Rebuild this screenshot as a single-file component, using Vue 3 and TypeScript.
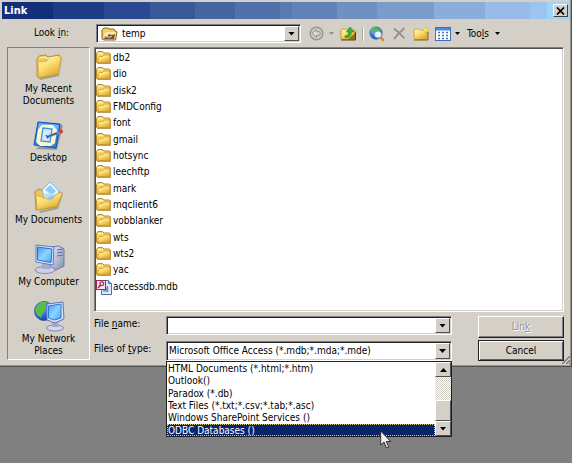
<script setup lang="ts">
import { ref } from 'vue'

interface Place {
  id: string
  lines: string[]
  roomy?: boolean
}

const places: Place[] = [
  { id: 'recent', lines: ['My Recent', 'Documents'] },
  { id: 'desktop', lines: ['Desktop'], roomy: true },
  { id: 'documents', lines: ['My Documents'], roomy: true },
  { id: 'computer', lines: ['My Computer'] },
  { id: 'network', lines: ['My Network', 'Places'] },
]

const folders: string[] = [
  'db2', 'dio', 'disk2', 'FMDConfig', 'font', 'gmail', 'hotsync',
  'leechftp', 'mark', 'mqclient6', 'vobblanker', 'wts', 'wts2', 'yac',
]

const fileTypes: string[] = [
  'HTML Documents (*.html;*.htm)',
  'Outlook()',
  'Paradox (*.db)',
  'Text Files (*.txt;*.csv;*.tab;*.asc)',
  'Windows SharePoint Services ()',
  'ODBC Databases ()',
]

const fileName = ref('')
const highlighted = ref(5)
</script>

<template>
  <div class="backdrop">
    <main class="dialog" role="dialog" aria-labelledby="dialog-title">
      <svg class="defs" width="0" height="0" aria-hidden="true">
        <defs>
          <linearGradient id="gold" x1="0" y1="0" x2="0.6" y2="1">
            <stop offset="0" stop-color="#fff7b4" />
            <stop offset="0.5" stop-color="#fbdf74" />
            <stop offset="1" stop-color="#e0a92c" />
          </linearGradient>
          <linearGradient id="screen" x1="0" y1="0" x2="1" y2="1">
            <stop offset="0" stop-color="#3f9cf4" />
            <stop offset="0.5" stop-color="#8fd4ff" />
            <stop offset="1" stop-color="#4aa4f6" />
          </linearGradient>
          <linearGradient id="casing" x1="0" y1="0" x2="1" y2="1">
            <stop offset="0" stop-color="#f0f3fb" />
            <stop offset="1" stop-color="#8088b8" />
          </linearGradient>
          <radialGradient id="ocean" cx="0.35" cy="0.3" r="0.8">
            <stop offset="0" stop-color="#9cd0ff" />
            <stop offset="0.5" stop-color="#2f72e0" />
            <stop offset="1" stop-color="#143a9c" />
          </radialGradient>
          <symbol id="small-folder" viewBox="0 0 16 14">
            <path d="M1 12.5V3L3 1h4l1.500 1.500H14l1 1V13H2z" fill="#8a7432" opacity="0.6" />
            <path d="M.5 11.500V2.500L2 .5h4.500L8 2h5.500l.5 1v9H1z" fill="#f6d56c" stroke="#b98b26" />
            <path d="M2 11.500V7l1.500-1.500h3L8 4h6v7.500z" fill="url(#gold)" stroke="#c99728" stroke-width="0.8" />
            <path d="M2 2h4l1 1H2z" fill="#fff6c0" />
          </symbol>
        </defs>
      </svg>

      <header class="titlebar">
        <h1 id="dialog-title">Link</h1>
        <button class="close" type="button" aria-label="Close">
          <svg width="9" height="8" viewBox="0 0 9 8"><path d="M1 .5l7 7M8 .5l-7 7" stroke="#000" stroke-width="1.700" /></svg>
        </button>
      </header>

      <div class="toolbar">
        <label class="look-label" for="look-in">Look <u>i</u>n:</label>
        <div class="combo look">
          <svg class="temp-icon" width="17" height="14" viewBox="0 0 17 14" aria-hidden="true">
            <path d="M1 12V3l2-2h4l1 1h5l1 2 2 1-1.500 8H3z" fill="#f4ce62" stroke="#8b651d" />
            <path d="M3 7l3-2h9l-2 6H3z" fill="#ffeaa0" />
            <path d="M3 12l1-3 2 1 2-3 3 1 3-1-1 5z" fill="#775033" />
            <path d="M3 10.500l3-1 2 1 3-1.500" stroke="#b9c9d6" stroke-width="1.300" fill="none" />
          </svg>
          <select id="look-in"><option>temp</option></select>
          <span class="drop" aria-hidden="true"><i class="arrow"></i></span>
        </div>
        <div class="tools">
          <button type="button" class="tool back" aria-label="Back" disabled>
            <svg width="15" height="15" viewBox="0 0 15 15">
              <circle cx="7.500" cy="7.500" r="6.300" fill="#cbc8c1" stroke="#96938d" stroke-width="1.300" />
              <path d="M3 7.500L7.500 3.500v2.300H11v3.400H7.500v2.300z" fill="#dedbd5" stroke="#96938d" />
            </svg>
          </button>
          <button type="button" class="tool menu-arrow" aria-label="Back history" disabled><i class="arrow small dim"></i></button>
          <button type="button" class="tool up" aria-label="Up one level">
            <svg width="16" height="15" viewBox="0 0 16 15">
              <path d="M1 13V4l1-1h4l1 1h8v9.500H1.500z" fill="url(#gold)" stroke="#c79b35" />
              <path d="M8 13.500L15 7v6.500z" fill="#9a6c1c" />
              <path d="M1 14h14.500V6" fill="none" stroke="#54400f" />
              <path d="M5 11.500c4 .6 6.300-1.500 6.300-5.500H14L10 1 6.500 6h2.300c0 2.500-1.300 3.700-3.800 4z" fill="#35b53a" stroke="#14801c" stroke-width="0.6" />
            </svg>
          </button>
          <span class="rule"></span>
          <button type="button" class="tool web" aria-label="Search the web">
            <svg width="17" height="16" viewBox="0 0 17 16">
              <circle cx="7" cy="7" r="6.300" fill="url(#ocean)" stroke="#5876b4" stroke-width="0.600" />
              <path d="M3 2l3-1 2 1-1 2 1 1-2 2-3-1-1-2zM9 2l2 1 1 2-2 1-1-2z" fill="#57ba4c" />
              <path d="M12 11.500l2 2.500" stroke="#d88a25" stroke-width="2.600" stroke-linecap="round" />
              <circle cx="9" cy="8.500" r="3.600" fill="#e5f3ff" stroke="#7f97ba" />
            </svg>
          </button>
          <button type="button" class="tool delete" aria-label="Delete" disabled>
            <svg width="13" height="13" viewBox="0 0 13 13"><path d="M1 1.500c4 3 7 6 10.500 10M11.500 1C8 4 4 8 1 12" fill="none" stroke="#918e8b" stroke-width="1.700" /></svg>
          </button>
          <button type="button" class="tool new" aria-label="Create new folder">
            <svg width="17" height="15" viewBox="0 0 17 15">
              <path d="M1 13V4l1-1h4l1 1h7v9.500H1.500z" fill="url(#gold)" stroke="#d3a842" />
              <path d="M1 14h14V6" fill="none" stroke="#7b6224" />
              <path d="M12.500 0l.8 2.800L16.500 4l-3.200 1-.8 3-.8-3-3.200-1 3.200-1.200z" fill="#fff36b" stroke="#e5b52c" stroke-width="0.600" />
            </svg>
          </button>
          <button type="button" class="tool views" aria-label="Views">
            <svg width="16" height="14" viewBox="0 0 16 14">
              <rect x="0.500" y="0.500" width="15" height="13" fill="#fff" stroke="#3d6cc4" />
              <rect x="1" y="1" width="14" height="2.500" fill="#4c86e6" />
              <path d="M3 5.500h10M3 8.500h10M3 11.500h10" stroke="#4873b9" stroke-width="1.500" stroke-dasharray="2 2" />
            </svg>
          </button>
          <button type="button" class="tool menu-arrow" aria-label="View choices"><i class="arrow small"></i></button>
          <button type="button" class="tool text">Too<u>l</u>s <i class="arrow small"></i></button>
        </div>
      </div>

      <div class="body">
        <nav class="places" aria-label="Places">
          <button v-for="place in places" :key="place.id" type="button" class="place" :class="{ roomy: place.roomy }">
            <svg width="32" height="32" viewBox="0 0 32 32" aria-hidden="true">
              <g v-if="place.id === 'recent'">
                <path d="M6 28l1 2 19-4 3-18-2-1z" fill="#77705a" opacity="0.5" />
                <path d="M4 26.500V9l2-3 7-1 2 2 11-2 1 2-2 17-19 4z" fill="#efc95c" stroke="#b78d30" />
                <path d="M5 12l9-1 2-3 12-2-2.500 17.500L6 27.500z" fill="url(#gold)" stroke="#d8ad45" stroke-width="0.8" />
                <path d="M6 8l6-1 2 1.500 11-2" fill="none" stroke="#fff8c8" />
              </g>
              <g v-else-if="place.id === 'desktop'">
                <path d="M3 30l21 1 6-24-2-2z" fill="#57607a" opacity="0.5" />
                <path d="M5 3l22 2-4 24-22-3z" fill="#2f7fe4" stroke="#174fae" />
                <path d="M6 4l20 2-2 9C20 6 13 5 5 9z" fill="#69b6fb" />
                <path d="M9 6h11l4 5-2 13-4 3H7l-4-4 2-13z" fill="#fdf7c8" />
                <path d="M10 9l9 1-2 13-9-1z" fill="#d5eafd" stroke="#4393e6" stroke-width="1.300" />
                <path d="M14 18l13-5" stroke="#7b8fb5" stroke-width="2.500" />
                <path d="M14 18l10-4" stroke="#294f9c" />
                <path d="M13 16l2 3.500" stroke="#2563b5" stroke-width="1.500" />
                <circle cx="28" cy="12.500" r="2" fill="#cd3f36" />
              </g>
              <g v-else-if="place.id === 'documents'">
                <path d="M6 30l18-4 5-15 1 2-5 15-18 4z" fill="#77705a" opacity="0.5" />
                <path d="M3 29L2 11l4-3 5 2 16 1-3 15z" fill="#f0c657" stroke="#b98e2e" />
                <path d="M9 9l8-8 9 9-4 12-9 1z" fill="#e9f6ff" stroke="#83b4dc" />
                <path d="M12 9l5-5 6 6-4 4z" fill="#8bcdf6" />
                <path d="M11 13l8-1 2 8-6 2z" fill="#b4defa" />
                <path d="M3 14l11 4 14-7 1 2-5 12-20 4z" fill="url(#gold)" stroke="#d2a033" stroke-width="0.8" />
                <path d="M15 17l8-4-3 5-4 2z" fill="#84c3ef" opacity="0.8" />
              </g>
              <g v-else-if="place.id === 'computer'">
                <path d="M17 4l9-1 5 3v17l-8 4-6-3z" fill="url(#casing)" stroke="#7078ab" />
                <path d="M24 7l6-1M24 10l6-1M24 13l6-1" stroke="#5969a4" />
                <circle cx="27" cy="19" r="1.200" fill="#6ddc5a" />
                <ellipse cx="12" cy="27" rx="10" ry="3.500" fill="#cbd0e6" stroke="#858cb5" />
                <path d="M9 21h7l1 5h-8z" fill="#a4abcf" />
                <path d="M3 2l18 2-1 18-17-3z" fill="#dfe5f7" stroke="#6876b5" />
                <path d="M4.500 4L19 6l-1 13.500L4.500 17z" fill="url(#screen)" stroke="#2470cd" />
              </g>
              <g v-else>
                <circle cx="11" cy="11" r="9.500" fill="url(#ocean)" stroke="#1a4196" stroke-width="0.7" />
                <path d="M4 6l4-4 6 0-2 4 1 4-3 2-2 6-4-3-2-5z" fill="#58bd44" />
                <path d="M15 3l4 3-1 3-3-2z" fill="#7bd25b" />
                <ellipse cx="22" cy="28" rx="8.500" ry="3" fill="#d4d8eb" stroke="#8289b4" />
                <path d="M19 21h6l1 6h-7z" fill="#a2a9cf" />
                <path d="M14 4l16-2 1 17-9 4-8-3z" fill="#dbe2f6" stroke="#6471b2" />
                <path d="M15.500 6L28 4v14l-6.500 2-6-2z" fill="url(#screen)" stroke="#2b77d3" />
              </g>
            </svg>
            <span v-for="line in place.lines" :key="line">{{ line }}</span>
          </button>
        </nav>

        <section class="content">
          <div class="listing">
            <ul class="files">
              <li v-for="name in folders" :key="name">
                <svg width="16" height="14" aria-hidden="true"><use href="#small-folder" /></svg>
                <span>{{ name }}</span>
              </li>
              <li>
                <svg width="16" height="16" viewBox="0 0 16 16" aria-hidden="true">
                  <path d="M5.500 1.500h7l3 3v11h-10z" fill="#dfeafa" stroke="#4d70ac" />
                  <path d="M12.500 1.500v3h3" fill="#9ab9e4" stroke="#4d70ac" />
                  <path d="M8 13V9h2v4M11.500 13V7" stroke="#6d93cf" stroke-width="1.500" fill="none" />
                  <rect x="0.500" y="1.500" width="9" height="9" fill="#f9e6ee" stroke="#9b2953" />
                  <circle cx="5.800" cy="4.800" r="1.900" fill="none" stroke="#a3265a" stroke-width="1.200" />
                  <path d="M4.500 6.200L2 9" stroke="#a3265a" stroke-width="1.500" />
                </svg>
                <span>accessdb.mdb</span>
              </li>
            </ul>
          </div>

          <form class="bottom" @submit.prevent>
            <div class="fields">
              <label for="file-name">File <u>n</u>ame:</label>
              <div class="combo name">
                <input id="file-name" v-model="fileName" type="text" autocomplete="off" />
                <button type="button" class="drop" aria-label="Recent names"><i class="arrow"></i></button>
              </div>
              <label for="file-type">Files of <u>t</u>ype:</label>
              <div class="combo type">
                <select id="file-type"><option>Microsoft Office Access (*.mdb;*.mda;*.mde)</option></select>
                <span class="drop" aria-hidden="true"><i class="arrow"></i></span>
                <div class="popup">
                  <ul class="choices" role="listbox" aria-label="File types">
                    <li
                      v-for="(type, index) in fileTypes"
                      :key="type"
                      role="option"
                      :aria-selected="index === highlighted"
                      :class="{ active: index === highlighted }"
                      @mouseenter="highlighted = index"
                    >{{ type }}</li>
                  </ul>
                  <div class="scrollbar">
                    <button type="button" aria-label="Scroll up"><i class="arrow flip"></i></button>
                    <span class="track"></span>
                    <span class="thumb"></span>
                    <button type="button" aria-label="Scroll down"><i class="arrow"></i></button>
                  </div>
                  <svg class="pointer" width="12" height="19" viewBox="0 0 12 19" aria-hidden="true">
                    <path d="M.7 1v14l3.300-3 2.500 6 2.300-1-2.500-5.500h4.400z" fill="#eee" stroke="#222" stroke-width="0.9" />
                  </svg>
                </div>
              </div>
            </div>
            <div class="actions">
              <button type="submit" disabled>Lin<u>k</u></button>
              <button type="button" class="cancel">Cancel</button>
            </div>
          </form>
        </section>
      </div>
      <svg class="grip" width="10" height="10" viewBox="0 0 10 10" aria-hidden="true">
        <path d="M1 10l9-9M5 10l5-5" stroke="#fff" />
        <path d="M2 10l8-8M6 10l4-4M9 10l1-1" stroke="#77746e" stroke-width="1.500" />
      </svg>
    </main>
  </div>
</template>

<style>
body {
  background: #808080;
}
</style>

<style scoped>
.backdrop {
  min-height: 100vh;
  background: #808080;
}
.dialog {
  position: relative;
  box-sizing: border-box;
  padding: 2px 1px 5px 2px;
  background: #d4d0c8;
  border-right: 1px solid #505050;
  border-bottom: 1px solid #505050;
  box-shadow: inset -1px -1px #98958f;
  color: #000;
  font: 10px/12px "DejaVu Sans Condensed", "DejaVu Sans", sans-serif;
}
.defs {
  display: block;
}
button,
input,
select {
  box-sizing: border-box;
  margin: 0;
  padding: 0;
  border: 0;
  border-radius: 0;
  background: none;
  color: inherit;
  font: inherit;
}
ul {
  margin: 0;
  padding: 0;
  list-style: none;
}
u {
  text-underline-offset: 1px;
}
.titlebar {
  display: flex;
  align-items: center;
  justify-content: space-between;
  height: 17px;
  padding: 0 2px;
  background: linear-gradient(90deg, #132f79 9%, #1d3c86 9% 18%, #2b4991 18% 26%, #3a5797 26% 34%, #4664a0 34% 41%, #5270a9 41% 49%, #5b79b1 49% 51%, #6382b8 51% 59%, #7090c1 59% 66%, #7b9bcb 66% 76%, #8aadd9 76% 85%, #9abbe5 85% 93%, #9ac5ed 93% 96%, #9cd4fb 96%);
}
.titlebar h1 {
  margin: 0;
  color: #fff;
  font-size: 11px;
  line-height: 16px;
}
.close {
  display: grid;
  place-items: center;
  width: 15px;
  height: 13px;
  background: #d4d0c8;
  border: 1px solid;
  border-color: #fff #404040 #404040 #fff;
}
.toolbar {
  display: flex;
  align-items: flex-start;
  padding: 5px 8px 4px 32px;
}
.look-label {
  flex: none;
  width: 62px;
  padding-top: 3px;
}
.combo {
  position: relative;
  box-sizing: border-box;
  display: flex;
  height: 19px;
  background: #fff;
  border: 1px solid;
  border-color: #808080 #fff #fff #808080;
  box-shadow: inset 1px 1px #202020, inset -1px -1px #d4d0c8;
}
.look {
  flex: 0 1 205px;
}
.combo select,
.combo input {
  flex: 1;
  min-width: 0;
  padding: 0 2px;
  appearance: none;
  outline: none;
}
.temp-icon {
  margin: 2px 2px 0 4px;
}
.drop {
  flex: none;
  display: grid;
  place-items: center;
  box-sizing: border-box;
  width: 15px;
  margin: 1px;
  background: #d4d0c8;
  border: 1px solid;
  border-color: #fff #505050 #505050 #fff;
}
.arrow {
  display: block;
  width: 7px;
  height: 4px;
  background: #000;
  clip-path: polygon(0 0, 100% 0, 50% 100%);
}
.arrow.small {
  width: 5px;
  height: 3px;
}
.arrow.dim {
  background: #918e8b;
}
.arrow.flip {
  transform: rotate(180deg);
}
.tools {
  flex: none;
  display: flex;
  align-items: center;
  height: 19px;
  margin-left: 8px;
}
.tool {
  flex: none;
  display: flex;
  align-items: center;
}
.tool svg {
  display: block;
}
.back {
  margin-right: 1px;
}
.menu-arrow {
  margin: 0 4px;
}
.up {
  margin-left: 2px;
}
.rule {
  width: 1px;
  height: 14px;
  margin: 0 5px 0 6px;
  background: #aaa79f;
  border-right: 1px solid #fff;
}
.delete,
.new {
  margin-left: 7px;
}
.views {
  margin-left: 5px;
}
.text {
  margin-left: 3px;
}
.text .arrow {
  margin-left: 6px;
}
.body {
  display: grid;
  grid-template-columns: 83px minmax(0, 1fr);
  gap: 4px;
  padding: 0 6px 0 5px;
}
.places {
  display: flex;
  flex-direction: column;
  gap: 12px;
  box-sizing: border-box;
  margin-bottom: 1px;
  padding: 2px 0;
  border: 1px solid;
  border-color: #808080 #fff #fff #808080;
}
.place {
  display: flex;
  flex-direction: column;
  align-items: center;
}
.place svg {
  margin-bottom: 1px;
}
.roomy {
  padding-bottom: 5px;
}
.content {
  min-width: 0;
}
.listing {
  padding: 2px 1px 16px;
  background: #fff;
  border: 1px solid;
  border-color: #808080 #fff #fff #808080;
  box-shadow: inset 1px 1px #505050, inset -1px -1px #d4d0c8;
}
.files {
  display: grid;
  grid-auto-rows: 1fr;
  height: 245px;
}
.files li {
  display: flex;
  align-items: center;
  gap: 1px;
}
.bottom {
  display: grid;
  grid-template-columns: minmax(0, 1fr) 86px;
  gap: 26px;
  padding-top: 4px;
}
.fields {
  display: grid;
  grid-template-columns: 72px minmax(0, 1fr);
  grid-template-rows: 19px 20px;
  row-gap: 6px;
}
.fields label {
  padding-top: 2px;
}
.type {
  height: 20px;
}
.actions {
  display: grid;
  grid-template-rows: 22px 21px;
  row-gap: 2px;
}
.actions button {
  border: 1px solid;
  border-color: #fff #202020 #202020 #fff;
  box-shadow: inset -1px -1px #808080;
}
.actions button:disabled {
  color: #99968f;
  text-shadow: 1px 1px #fff;
}
.actions .cancel {
  border-color: #202020;
  box-shadow: inset 1px 1px #fff, inset -1px -1px #606060;
}
.popup {
  position: absolute;
  top: calc(100% + 1px);
  left: -1px;
  right: -1px;
  box-sizing: border-box;
  display: flex;
  height: 76px;
  background: #fff;
  border: 1px solid #202020;
}
.choices {
  flex: 1;
  display: grid;
  grid-auto-rows: minmax(0, 1fr);
}
.choices li {
  padding-left: 1px;
  line-height: 13px;
  white-space: nowrap;
}
.choices .active {
  background: #0a246a;
  color: #fff;
  outline: 1px dotted #d8c98a;
  outline-offset: -1px;
}
.scrollbar {
  display: flex;
  flex-direction: column;
  width: 16px;
}
.scrollbar button,
.thumb {
  display: grid;
  place-items: center;
  box-sizing: border-box;
  height: 15px;
  background: #d4d0c8;
  border: 1px solid;
  border-color: #fff #505050 #505050 #fff;
}
.thumb {
  height: 21px;
}
.track {
  flex: 1;
  background: repeating-conic-gradient(#fff 0 25%, #d4d0c8 0 50%) 0 0 / 2px 2px;
}
.pointer {
  position: absolute;
  top: 68px;
  right: 59px;
}
.grip {
  position: absolute;
  right: 1px;
  bottom: 2px;
}
</style>
